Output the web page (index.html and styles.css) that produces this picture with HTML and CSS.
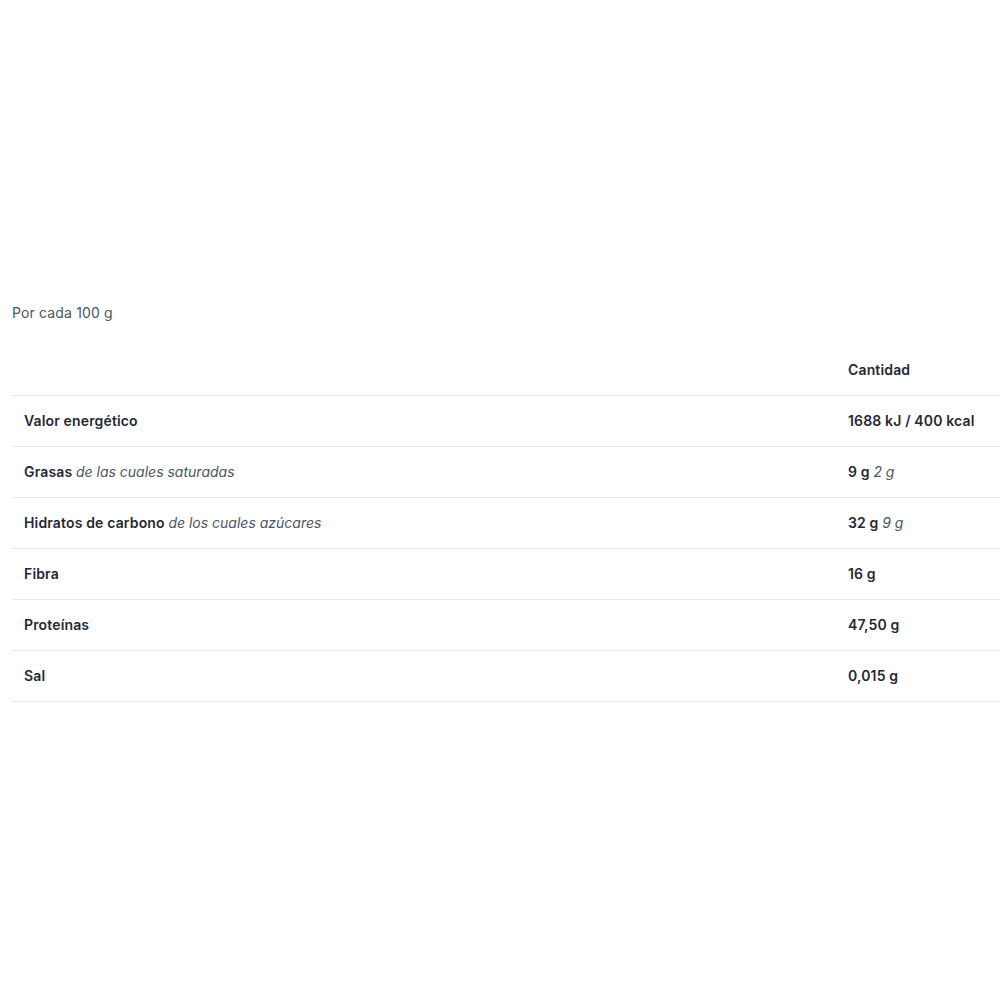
FILE: index.html
```html
<!DOCTYPE html>
<html lang="es">
<head>
<meta charset="utf-8">
<link rel="stylesheet" href="styles.css">
</head>
<body>
<section class="nutrition">
  <p class="per">Por cada 100 g</p>
  <table class="table">
    <thead>
      <tr><th class="name"></th><th class="qty">Cantidad</th></tr>
    </thead>
    <tbody>
      <tr><td class="name">Valor energético</td><td class="qty">1688 kJ / 400 kcal</td></tr>
      <tr><td class="name">Grasas <em>de las cuales saturadas</em></td><td class="qty">9 g <em>2 g</em></td></tr>
      <tr><td class="name">Hidratos de carbono <em>de los cuales azúcares</em></td><td class="qty">32 g <em>9 g</em></td></tr>
      <tr><td class="name">Fibra</td><td class="qty">16 g</td></tr>
      <tr><td class="name">Proteínas</td><td class="qty">47,50 g</td></tr>
      <tr><td class="name">Sal</td><td class="qty">0,015 g</td></tr>
    </tbody>
  </table>
</section>
</body>
</html>
```
FILE: styles.css
```css
html, body {
  margin: 0;
  padding: 0;
  background: #fff;
}
body {
  font-family: Inter, "Noto Sans", sans-serif;
  color: #1f2937;
  letter-spacing: 0.15px;
}
.nutrition {
  padding: 303px 0 0 12px;
}
.per {
  margin: 0;
  font-size: 14px;
  line-height: 20px;
  color: #4b5563;
}
.table {
  margin-top: 21px;
  width: 988px;
  border-collapse: collapse;
  font-size: 14px;
}
.table th, .table td {
  text-align: left;
  padding: 0 12px;
  height: 50px;
  font-weight: 600;
  line-height: 20px;
}
.table thead th {
  height: 51px;
}
.table tbody td {
  border-top: 1px solid #e5e7eb;
}
.table tbody tr:last-child td {
  border-bottom: 1px solid #e5e7eb;
}
.table .qty {
  width: 140px;
}
.table em {
  font-weight: 400;
  font-style: italic;
  color: #4b5563;
  letter-spacing: 0;
}
```
